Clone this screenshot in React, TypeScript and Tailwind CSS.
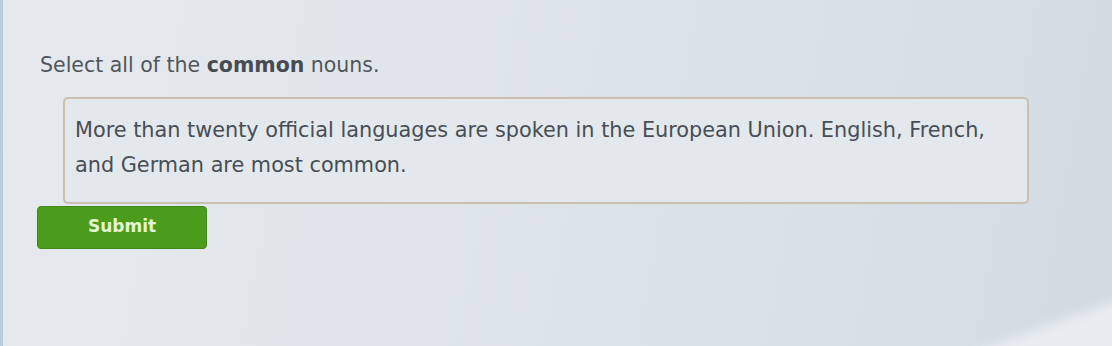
import React from "react";

export default function App() {
  return (
    <div
      className="relative w-[1112px] h-[346px] overflow-hidden bg-[linear-gradient(100deg,#e6eaee_0%,#dfe5ea_40%,#d9e0e6_75%,#d3dae1_100%)]"
      style={{ fontFamily: '"DejaVu Sans", Verdana, sans-serif' }}
    >
      <div className="absolute left-0 top-0 h-full w-[3px] bg-[#b9cde0]" />
      <div className="flex flex-col pl-[40px] pt-[51px]">
        <p className="text-[20.5px] leading-[28px] text-[#50565c]">
          Select all of the <span className="font-bold text-[#464c52]">common</span> nouns.
        </p>
        <div className="ml-[23px] mt-[18px] w-[966px] h-[107px] rounded-[5px] border-2 border-[#cbbfb2] bg-[#e3e8ec] px-[10px] pt-[14px]">
          <p className="text-[20.8px] leading-[35px] text-[#474e55] whitespace-nowrap">
            More than twenty official languages are spoken in the European Union. English, French,
            <br />
            and German are most common.
          </p>
        </div>
        <button className="-ml-[3px] mt-[2px] w-[170px] h-[43px] rounded-[4px] bg-[#4b9c1c] border border-[#3f8a16] text-[17px] font-bold text-[#e4f5d4] flex items-center justify-center pb-[1px]">
          Submit
        </button>
      </div>
      <div className="absolute right-[-40px] bottom-[-30px] w-[200px] h-[50px] rotate-[-20deg] bg-[#eef2f4] opacity-80 blur-[6px]" />
    </div>
  );
}
